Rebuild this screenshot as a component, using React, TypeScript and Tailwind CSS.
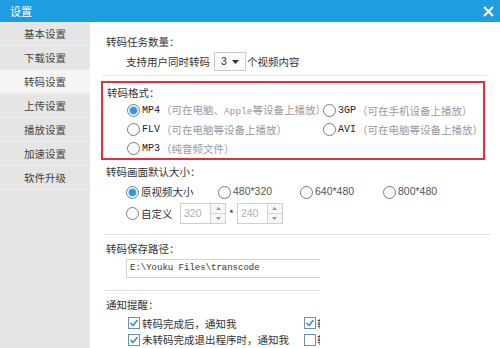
import React from "react";

const cjk = { fontFamily: '"Noto Sans CJK SC", "Noto Sans", sans-serif' };
const mono = { fontFamily: '"Liberation Mono", "Noto Sans CJK SC", monospace' };
const sans = { fontFamily: '"Liberation Sans", sans-serif' };

function Radio({ checked = false }: { checked?: boolean }) {
  return (
    <span className="relative inline-flex w-[13px] h-[13px] shrink-0 rounded-full border border-[#7a7a7a] bg-white items-center justify-center">
      {checked && <span className="w-[7px] h-[7px] rounded-full bg-[#2b9be0] ring-1 ring-[#a9d6f3]" />}
    </span>
  );
}

function Check({ checked = false }: { checked?: boolean }) {
  return (
    <span className="inline-flex w-[12px] h-[12px] shrink-0 border border-[#6f8fb0] bg-white items-center justify-center">
      {checked && (
        <svg width="10" height="10" viewBox="0 0 10 10">
          <path d="M1.5 5 L4 7.5 L8.5 2" stroke="#3a8fd0" strokeWidth="1.6" fill="none" />
        </svg>
      )}
    </span>
  );
}

function Spinner({ value }: { value: string }) {
  return (
    <div className="flex w-[46px] h-[21px] shrink-0 border border-[#cfcfcf] bg-white">
      <div className="flex-1 flex items-center pl-[3px] text-[10.5px] text-[#b0b0b0]" style={sans}>{value}</div>
      <div className="w-[15px] flex flex-col border-l border-[#d5d5d5]">
        <div className="flex-1 flex items-center justify-center border-b border-[#d5d5d5] bg-[#f7f7f7]">
          <svg width="5" height="3" viewBox="0 0 5 3"><path d="M0 3 L2.5 0 L5 3Z" fill="#999" /></svg>
        </div>
        <div className="flex-1 flex items-center justify-center bg-[#f7f7f7]">
          <svg width="5" height="3" viewBox="0 0 5 3"><path d="M0 0 L2.5 3 L5 0Z" fill="#999" /></svg>
        </div>
      </div>
    </div>
  );
}

function Fmt({ name, note, checked = false }: { name: string; note: React.ReactNode; checked?: boolean }) {
  return (
    <div className="flex items-center whitespace-nowrap">
      <Radio checked={checked} />
      <span className="ml-[2px] text-[10px] text-[#222] leading-[13px]" style={mono}>{name}</span>
      <span className="ml-[1px] text-[10.5px] text-[#999]">{note}</span>
    </div>
  );
}

const navItems = ["基本设置", "下载设置", "转码设置", "上传设置", "播放设置", "加速设置", "软件升级"];

export default function App() {
  return (
    <div className="w-[500px] h-[348px] overflow-hidden bg-white flex flex-col text-[10.5px] text-[#333]" style={cjk}>
      <div className="h-[22px] shrink-0 bg-[#1e9de0] flex items-center justify-between pl-[10px] pr-[6px]">
        <span className="text-white text-[11px]">设置</span>
        <svg width="11" height="11" viewBox="0 0 11 11">
          <path d="M1 1 L10 10 M10 1 L1 10" stroke="white" strokeWidth="2" />
        </svg>
      </div>
      <div className="flex flex-1 min-h-0">
        <div className="w-[90px] shrink-0 bg-[#e5e5e5] flex flex-col">
          {navItems.map((n, i) => (
            <div
              key={n}
              className={`h-[24px] flex items-center justify-center border-b border-[#efefef] text-[10.5px] text-[#444] ${i === 2 ? "bg-[#f5f5f5]" : ""}`}
            >
              {n}
            </div>
          ))}
        </div>
        <div className="flex-1 flex flex-col">
          <div className="h-[235px] shrink-0 border-r border-[#d2d2d2] mr-[1px] flex flex-col">
            <div className="pl-[16px] pt-[12px] leading-[16px]">转码任务数量：</div>
            <div className="pl-[36px] mt-[2px] flex items-center h-[19px]">
              <span>支持用户同时转码</span>
              <div className="ml-[4px] w-[32px] h-[19px] border border-[#cacaca] bg-[#fafafa] flex items-center justify-between px-[6px]">
                <span className="text-[10.5px]" style={sans}>3</span>
                <svg width="7" height="4" viewBox="0 0 7 4"><path d="M0 0 L3.5 4 L7 0Z" fill="#333" /></svg>
              </div>
              <span className="ml-[1px]">个视频内容</span>
            </div>
            <div className="mt-[4px] mx-[12px] h-px bg-[#e6e6e6]" />
            <div className="mt-[5px] ml-[11px] mr-[16px] h-[81px] border-2 border-[#d8333f] flex flex-col">
              <div className="pl-[4px] pt-[2px] leading-[16px]">转码格式：</div>
              <div className="pl-[24px] flex flex-col">
                <div className="h-[19px] flex items-center">
                  <div className="w-[196px] shrink-0">
                    <Fmt name="MP4" checked note={<>（可在电脑、<span className="text-[9.5px]" style={mono}>Apple</span>等设备上播放）</>} />
                  </div>
                  <Fmt name="3GP" note="（可在手机设备上播放）" />
                </div>
                <div className="h-[19px] flex items-center">
                  <div className="w-[196px] shrink-0">
                    <Fmt name="FLV" note="（可在电脑等设备上播放）" />
                  </div>
                  <Fmt name="AVI" note="（可在电脑等设备上播放）" />
                </div>
                <div className="h-[19px] flex items-center">
                  <Fmt name="MP3" note="（纯音频文件）" />
                </div>
              </div>
            </div>
            <div className="pl-[16px] mt-[4px] leading-[16px]">转码画面默认大小：</div>
            <div className="pl-[36px] mt-[4px] h-[18px] flex items-center">
              <div className="w-[92px] flex items-center"><Radio checked /><span className="ml-[2px]">原视频大小</span></div>
              <div className="w-[82px] flex items-center"><Radio /><span className="ml-[2px] text-[#555]" style={sans}>480*320</span></div>
              <div className="w-[83px] flex items-center"><Radio /><span className="ml-[2px] text-[#555]" style={sans}>640*480</span></div>
              <div className="flex items-center"><Radio /><span className="ml-[2px] text-[#555]" style={sans}>800*480</span></div>
            </div>
            <div className="pl-[36px] mt-[3px] h-[21px] flex items-center">
              <Radio />
              <span className="ml-[2px] w-[39px]">自定义</span>
              <Spinner value="320" />
              <span className="mx-[3px]">*</span>
              <Spinner value="240" />
            </div>
            <div className="mt-[10px] ml-[14px] mr-[10px] h-px bg-[#e3e3e3]" />
            <div className="pl-[16px] mt-[6px] leading-[16px]">转码保存路径：</div>
          </div>
          <div className="w-[230px] flex-1 overflow-hidden flex flex-col">
            <div className="ml-[36px] mt-[2px] w-[194px] shrink-0 h-[19px] border border-[#d2d2d2] border-r-0 flex items-center pl-[3px] text-[9px] text-[#333] whitespace-nowrap" style={mono}>
              E:\Youku Files\transcode
            </div>
            <div className="mt-[12px] ml-[14px] h-px bg-[#e3e3e3]" />
            <div className="pl-[16px] mt-[6px] leading-[16px]">通知提醒：</div>
            <div className="pl-[38px] mt-[3px] h-[18px] flex items-center whitespace-nowrap">
              <div className="w-[176px] shrink-0 flex items-center"><Check checked /><span className="ml-[2px]">转码完成后，通知我</span></div>
              <Check checked /><span className="ml-[1px]">转码完成后</span>
            </div>
            <div className="pl-[38px] mt-[1px] h-[18px] flex items-center whitespace-nowrap">
              <div className="w-[176px] shrink-0 flex items-center"><Check checked /><span className="ml-[2px]">未转码完成退出程序时，通知我</span></div>
              <Check /><span className="ml-[1px]">转码完成后</span>
            </div>
          </div>
        </div>
      </div>
    </div>
  );
}
